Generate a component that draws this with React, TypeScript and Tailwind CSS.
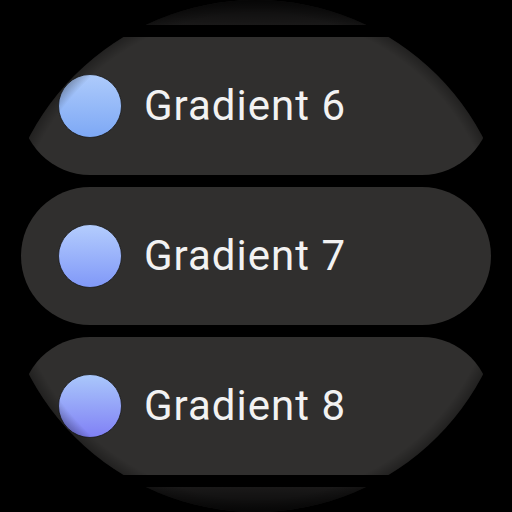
import React from "react";

type Item = { id: string; label: string; from: string; to: string; dim?: boolean };

const items: Item[] = [
  { id: "g5", label: "Gradient 5", from: "#a9c6f9", to: "#7fa6f3", dim: true },
  { id: "g6", label: "Gradient 6", from: "#aecbfb", to: "#7da8f5" },
  { id: "g7", label: "Gradient 7", from: "#b4cdfd", to: "#8098f8" },
  { id: "g8", label: "Gradient 8", from: "#aac8fb", to: "#8080f5" },
  { id: "g9", label: "Gradient 9", from: "#a6a8f8", to: "#8a7df2", dim: true },
];

function Swatch({ id, from, to }: { id: string; from: string; to: string }) {
  return (
    <svg width="64" height="64" viewBox="0 0 64 64" className="shrink-0">
      <defs>
        <linearGradient id={`sw-${id}`} x1="0" y1="0" x2="0" y2="1">
          <stop offset="0" stopColor={from} />
          <stop offset="1" stopColor={to} />
        </linearGradient>
      </defs>
      <circle cx="32" cy="32" r="31.5" fill={`url(#sw-${id})`} stroke="#1a1a1a" strokeWidth="0.8" />
    </svg>
  );
}

function Chip({ item }: { item: Item }) {
  return (
    <div
      className={
        "h-[138px] shrink-0 rounded-full bg-[#302f2e] flex items-center pl-[37px] gap-[22px] " +
        (item.dim ? "opacity-60" : "")
      }
    >
      <Swatch id={item.id} from={item.from} to={item.to} />
      <span
        className="text-[42px] leading-none text-[#f2f2f2] tracking-[1px]"
        style={{ fontFamily: "Roboto, 'Noto Sans', sans-serif" }}
      >
        {item.label}
      </span>
    </div>
  );
}

export default function App() {
  return (
    <div className="w-[512px] h-[512px] bg-black relative overflow-hidden">
      <div className="w-full h-full rounded-full overflow-hidden relative">
        <div className="flex flex-col gap-3 px-[21px] -mt-[113px]">
          {items.map((it) => (
            <Chip key={it.id} item={it} />
          ))}
        </div>
        {/* soft fade along the round bezel */}
        <div className="absolute inset-0 pointer-events-none bg-[radial-gradient(circle_closest-side,transparent_95%,rgba(0,0,0,0.3)_100%)]" />
        {/* top and bottom edge fade */}
        <div className="absolute inset-x-0 top-0 h-[30px] pointer-events-none bg-gradient-to-b from-black/70 to-transparent" />
        <div className="absolute inset-x-0 bottom-0 h-[30px] pointer-events-none bg-gradient-to-t from-black/70 to-transparent" />
      </div>
    </div>
  );
}
